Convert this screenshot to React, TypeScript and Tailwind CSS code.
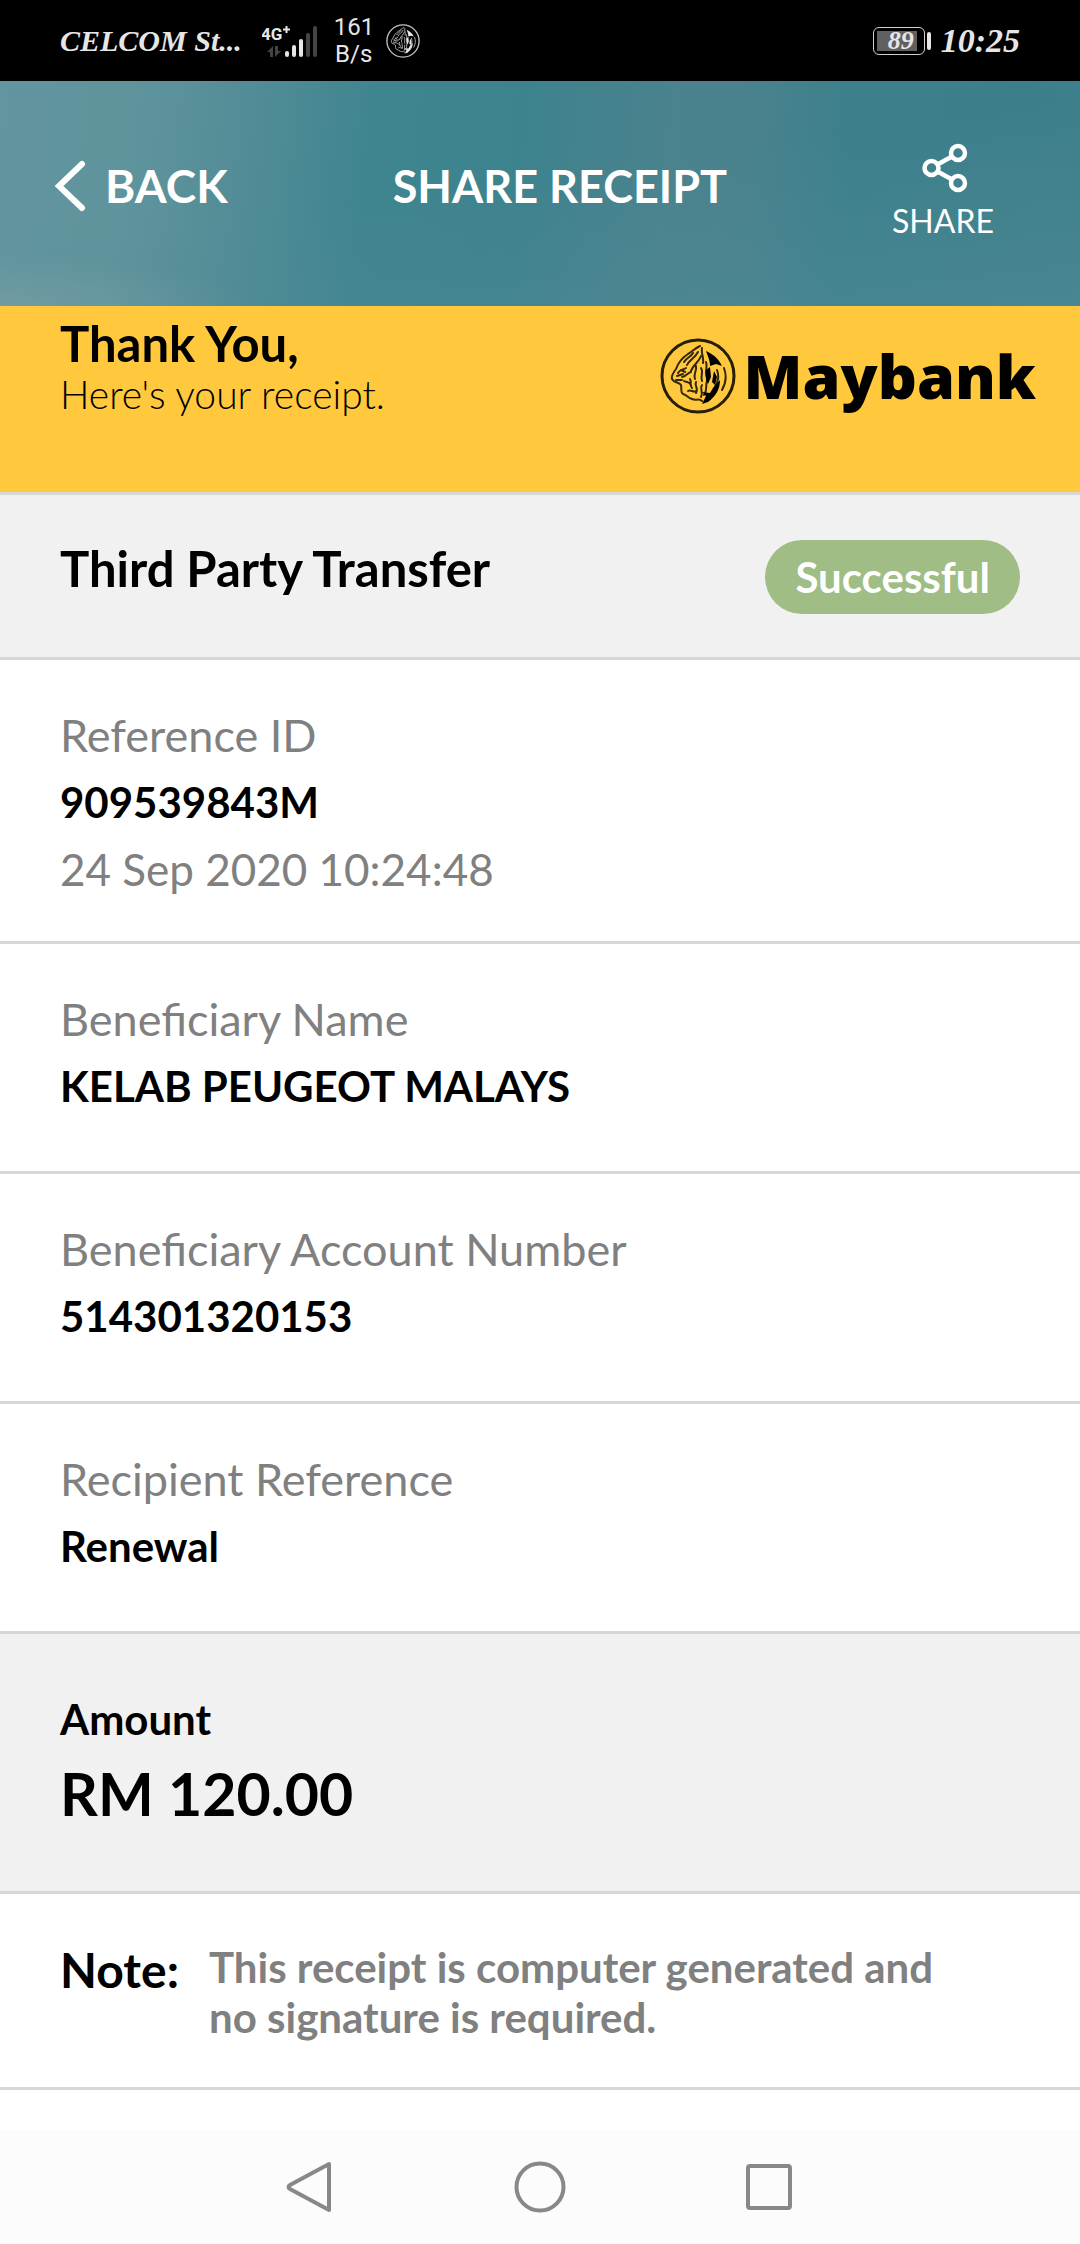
import type { ReactNode } from "react";

function TigerEmblem({ className }: { className: string }) {
  return (
    <svg viewBox="0 0 76 76" className={className} fill="none" stroke="currentColor" aria-hidden="true">
      <circle cx="38" cy="38" r="36" strokeWidth="3" opacity="0.85" />
      <g strokeWidth="2" strokeLinecap="round" strokeLinejoin="round" opacity="0.8">
        <path d="M40 8c-5 2-8 6-12 8-6 4-10 9-12 15-3 4-5 7-4 10 2 4 7 3 9 6 1 4-1 7 2 9 4 1 5 4 9 5 4 2 7-1 10 2" />
        <path d="M33 15c-2 4-7 5-9 9M38 14c-3 6-9 8-11 13M41 18c-2 6-8 9-10 15M26 30c-3 2-6 1-8 5M31 34c-4 1-5 5-9 5M36 28c1 5-3 8-1 13M30 41c2 3-1 6 2 9M24 43c3 2 5 0 7 4M36 44c-2 4 3 6 0 11M28 53c3-2 5 2 8 0M41 30c3 4-1 8 1 13M42 47c-3 4 2 7-1 12" />
        <path d="M42 10c-1 6 2 9 1 15M46 24c2 6-2 10 1 16M47 43c-2 5 1 9-3 14M57 32c3 8 0 13-3 19M64 30c3 8 2 15-2 22M17 38l6-2M16 42h6M21 32l4 2" />
      </g>
      <path
        d="M46 13c7 3 13 8 16 15l-6-2-6 2c0-6-2-9-4-15ZM53 50l7-8c0 9-4 16-12 22l-6 2 4-8-4-4 8 1ZM46 32l4-3 1 10-3 7-2-4ZM54 33l3 6-2 8-3-3Z"
        fill="currentColor"
        stroke="none"
      />
    </svg>
  );
}

function SignalIcon() {
  return (
    <svg viewBox="0 0 56 32" className="h-8 w-14" aria-label="4G+ signal">
      <text x="-1" y="15" fill="#e6e6e6" className="font-['Roboto'] text-[17px] font-bold">
        4G
      </text>
      <path d="M21 4.500h7M24.500 1v7" stroke="#e6e6e6" strokeWidth="2" />
      <path d="M11 32V21l-6 6h3v5ZM13 21v11l6-6h-3v-5Z" fill="#444" />
      <g strokeWidth="4" strokeLinecap="round">
        <path d="M25 28v2M32 22v8M39 16v14" stroke="#e6e6e6" />
        <path d="M46 10v20M53 3v27" stroke="#444" />
      </g>
    </svg>
  );
}

function StatusBar() {
  return (
    <div className="flex h-[81px] items-center justify-between bg-black px-[60px] text-[#e6e6e6]">
      <div className="flex items-center">
        <span className="font-['Liberation_Serif',serif] text-[30px] font-bold italic">CELCOM St...</span>
        <div className="ml-5">
          <SignalIcon />
        </div>
        <div className="ml-4 w-10 text-center font-['Roboto',sans-serif] text-2xl leading-[27px]">
          <div>161</div>
          <div>B/s</div>
        </div>
        <TigerEmblem className="ml-3 size-[34px]" />
      </div>
      <div className="flex items-center font-['Liberation_Serif',serif] font-bold italic">
        <div className="flex h-7 w-[52px] rounded-md border border-[#cfcfcf] p-[3px]">
          <div className="flex w-10 items-center justify-center bg-[#606060] pl-2 text-[26px] leading-none">89</div>
        </div>
        <div className="ml-[2px] h-[18px] w-1 rounded-sm bg-[#e6e6e6]" />
        <span className="ml-[10px] text-[34px]">10:25</span>
      </div>
    </div>
  );
}

function Header() {
  return (
    <header className="flex h-[225px] items-center justify-between bg-[radial-gradient(ellipse_at_0%_100%,rgba(125,160,165,0.6),transparent_16%),linear-gradient(172deg,transparent_45%,rgba(80,138,150,0.6)_100%),linear-gradient(96deg,#62959f_0%,#5f949d_12%,#548d97_22%,#3f858f_34%,#3d838d_48%,#4a828d_61%,#49828d_69%,#3b808b_78%,#3d7f8a_100%)] pr-[86px] pl-[54px] text-white">
      <button type="button" className="flex items-center gap-[19px] pb-4 text-[46px] leading-[56px] font-bold">
        <svg viewBox="0 0 32 52" className="h-[52px] w-8" fill="none" stroke="currentColor" strokeWidth="6" strokeLinecap="round" aria-hidden="true">
          <path d="M28 4 5 26l23 22" />
        </svg>
        BACK
      </button>
      <h1 className="pb-4 text-[45px] leading-[56px] font-bold">SHARE RECEIPT</h1>
      <button type="button" className="flex flex-col items-center gap-2 pb-1 text-[32px] leading-10">
        <svg viewBox="0 0 46 50" className="ml-1 h-[50px] w-[46px]" fill="none" stroke="currentColor" strokeWidth="4.500" aria-hidden="true">
          <circle cx="9.500" cy="25" r="7" />
          <circle cx="36" cy="10" r="7" />
          <circle cx="36" cy="40" r="7" />
          <path d="m15.500 21.500 14.500-8M15.500 28.500l14.500 8" />
        </svg>
        SHARE
      </button>
    </header>
  );
}

function Section({ children, className }: { children: ReactNode; className: string }) {
  return <section className={`border-b-3 border-[#d7d7d7] px-[60px] ${className}`}>{children}</section>;
}

function Detail({ label, value, date }: { label: string; value: string; date?: string }) {
  return (
    <Section className={date ? "pt-[42px] pb-[38px]" : "pt-[42px] pb-[51px]"}>
      <dl className="leading-[67px]">
        <dt className="text-[45px] text-[#808080]">{label}</dt>
        <dd className="text-[42px] font-bold">{value}</dd>
        {date && <dd className="text-[44px] text-[#808080]">{date}</dd>}
      </dl>
    </Section>
  );
}

function NavBar() {
  return (
    <nav className="flex h-[114px] items-center justify-center gap-[178px] bg-[#fcfcfc] text-[#888]">
      <button type="button" aria-label="Back">
        <svg viewBox="0 0 52 52" className="size-[52px]" fill="none" stroke="currentColor" strokeWidth="4" strokeLinejoin="round">
          <path d="M45 3v46L6 28q-3-2 0-4Z" />
        </svg>
      </button>
      <button type="button" aria-label="Home">
        <svg viewBox="0 0 52 52" className="size-[52px]" fill="none" stroke="currentColor" strokeWidth="4">
          <circle cx="26" cy="26" r="23.500" />
        </svg>
      </button>
      <button type="button" aria-label="Recent apps">
        <svg viewBox="0 0 52 52" className="size-[52px]" fill="none" stroke="currentColor" strokeWidth="4">
          <rect x="4" y="5" width="42" height="42" rx="2" />
        </svg>
      </button>
    </nav>
  );
}

export default function App() {
  return (
    <div className="flex min-h-screen flex-col bg-white font-['Lato',sans-serif] text-black">
      <StatusBar />
      <Header />
      <main className="flex-1">
        <Section className="flex h-[189px] items-start justify-between bg-[#ffc83d] pt-2">
          <div>
            <h2 className="text-[49px] leading-[58px] font-bold">Thank You,</h2>
            <p className="text-[39px] leading-[44px] font-light">Here's your receipt.</p>
          </div>
          <div className="-mr-4 flex items-center gap-2 pt-6">
            <TigerEmblem className="size-[76px]" />
            <span className="font-['Open_Sans',sans-serif] text-[61px] leading-[74px] font-extrabold">Maybank</span>
          </div>
        </Section>
        <Section className="flex items-start justify-between bg-[#f1f1f1] pt-[43px] pb-[43px]">
          <h2 className="text-[49px] leading-[60px] font-bold">Third Party Transfer</h2>
          <span className="mt-[2px] rounded-full bg-[#9fbd84] px-[30px] text-[42px] leading-[74px] font-bold text-white">
            Successful
          </span>
        </Section>
        <Detail label="Reference ID" value="909539843M" date="24 Sep 2020 10:24:48" />
        <Detail label="Beneficiary Name" value="KELAB PEUGEOT MALAYS" />
        <Detail label="Beneficiary Account Number" value="514301320153" />
        <Detail label="Recipient Reference" value="Renewal" />
        <Section className="bg-[#f1f1f1] pt-[54px] pb-[53px]">
          <p className="text-[42px] leading-[62px] font-bold">Amount</p>
          <p className="text-[59px] leading-[88px] font-bold">RM 120.00</p>
        </Section>
        <Section className="flex gap-[30px] pt-12 pb-[42px]">
          <p className="text-[48px] leading-[56px] font-bold">Note:</p>
          <p className="max-w-[760px] pb-[3px] text-[42px] leading-[50px] font-bold text-[#808080]">
            This receipt is computer generated and no signature is required.
          </p>
        </Section>
      </main>
      <NavBar />
    </div>
  );
}
